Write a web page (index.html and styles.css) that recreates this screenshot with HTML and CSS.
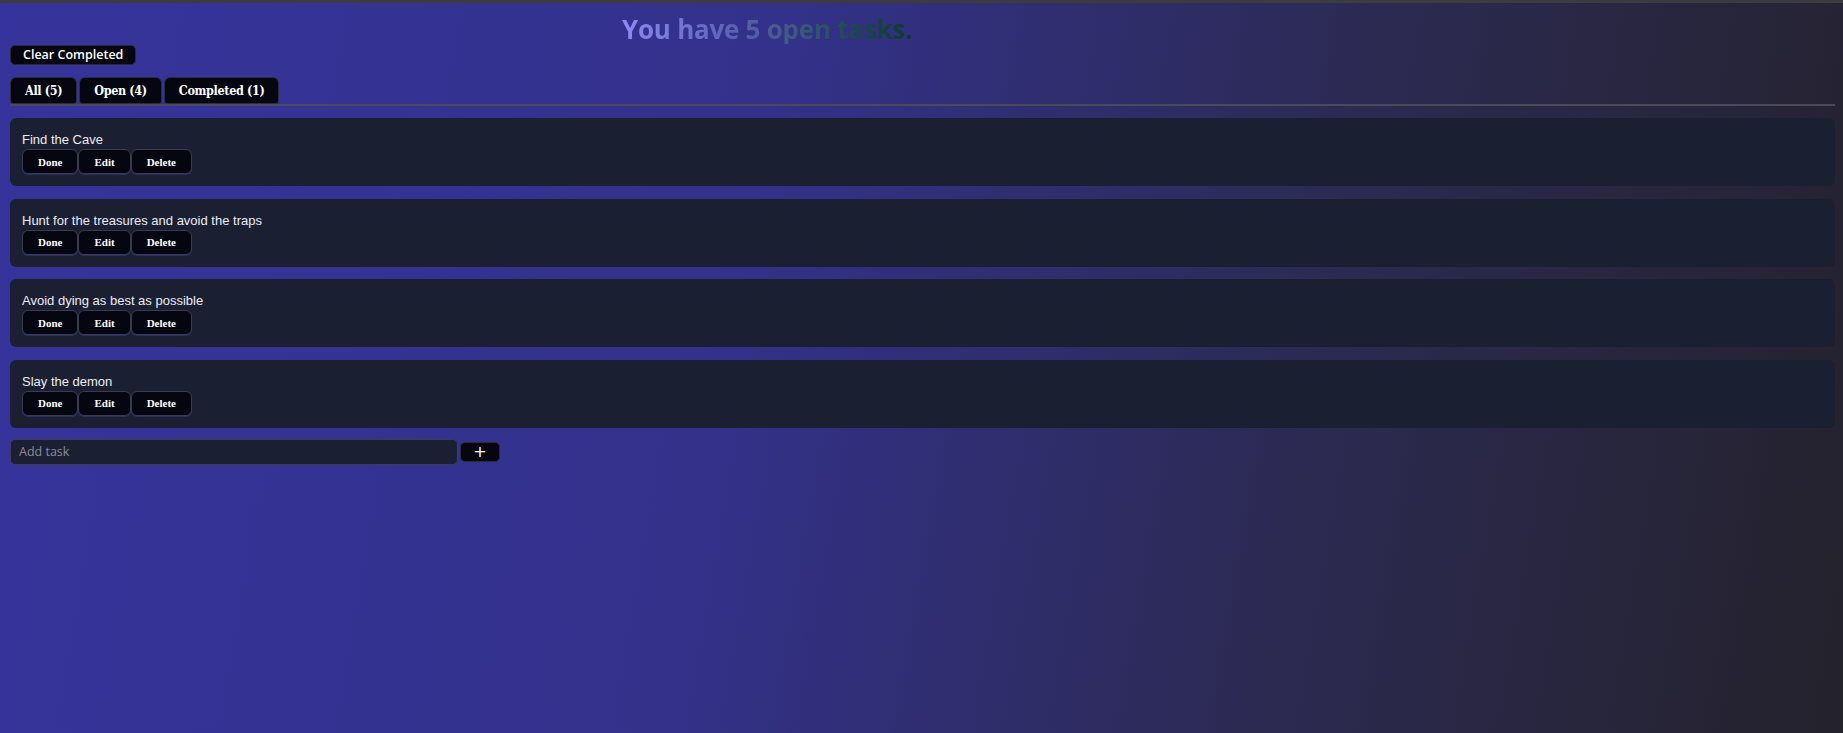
FILE: index.html
```html
<!DOCTYPE html>
<html lang="en">
<head>
<meta charset="utf-8">
<title>Tasks</title>
<link rel="stylesheet" href="styles.css">
</head>
<body>
<div class="app">
  <header class="header">
    <h1 class="title"><span class="title-text">You have 5 open tasks.</span></h1>
  </header>
  <div class="toolbar">
    <button class="clear-btn">Clear Completed</button>
  </div>
  <nav class="tabs">
    <button class="tab">All (5)</button>
    <button class="tab">Open (4)</button>
    <button class="tab">Completed (1)</button>
  </nav>
  <ul class="task-list">
    <li class="task">
      <div class="task-name">Find the Cave</div>
      <div class="task-actions"><button class="act">Done</button><button class="act">Edit</button><button class="act">Delete</button></div>
    </li>
    <li class="task">
      <div class="task-name">Hunt for the treasures and avoid the traps</div>
      <div class="task-actions"><button class="act">Done</button><button class="act">Edit</button><button class="act">Delete</button></div>
    </li>
    <li class="task">
      <div class="task-name">Avoid dying as best as possible</div>
      <div class="task-actions"><button class="act">Done</button><button class="act">Edit</button><button class="act">Delete</button></div>
    </li>
    <li class="task">
      <div class="task-name">Slay the demon</div>
      <div class="task-actions"><button class="act">Done</button><button class="act">Edit</button><button class="act">Delete</button></div>
    </li>
  </ul>
  <form class="add-form">
    <input class="add-input" type="text" placeholder="Add task">
    <button class="add-btn" type="button">+</button>
  </form>
</div>
</body>
</html>
```

FILE: styles.css
```css
html, body {
  margin: 0;
  padding: 0;
  height: 100%;
}
body {
  border-top: 3px solid #3b3b40;
  box-sizing: border-box;
  background: linear-gradient(100deg, #36349c 0%, #33318a 40%, #2c2a52 70%, #24222b 100%);
  color: #e8e8f0;
  font-family: "Liberation Sans", Arial, sans-serif;
}
.app {
  padding: 0 8px 0 10px;
}
.header {
  padding-top: 11px;
}
.title {
  margin: 0 0 0 612px;
  font-family: "Open Sans", "Noto Sans", sans-serif;
  font-weight: 700;
  font-size: 26px;
  line-height: 30px;
  letter-spacing: -0.25px;
}
.title-text {
  display: inline-block;
  background: linear-gradient(90deg, #8f8af6 0%, #6d6fcb 25%, #5060a4 45%, #3a5878 62%, #1f4a52 78%, #0b3a2c 100%);
  -webkit-background-clip: text;
  background-clip: text;
  color: transparent;
}
.toolbar {
  margin-top: 1px;
}
.clear-btn {
  height: 20px;
  padding: 0 12px;
  background: #05060f;
  color: #fff;
  border: 1px solid #2a2a3a;
  border-radius: 5px;
  font-family: "Open Sans", "Noto Sans", sans-serif;
  font-weight: 600;
  font-size: 12.5px;
  line-height: 18px;
}
.tabs {
  margin-top: 12px;
  display: flex;
  gap: 2px;
  border-bottom: 2px solid #4a4a58;
}
.tab {
  height: 27px;
  padding: 0 14px;
  background: #05060f;
  color: #fff;
  border: 1px solid #2c2c40;
  border-radius: 6px 6px 3px 3px;
  font-family: "DejaVu Serif Condensed", "DejaVu Serif", serif;
  font-stretch: condensed;
  font-weight: 700;
  font-size: 12.5px;
  letter-spacing: -0.35px;
}
.task-list {
  list-style: none;
  margin: 12px 0 0;
  padding: 0;
  display: flex;
  flex-direction: column;
  gap: 12.5px;
}
.task {
  background: #1b1f32;
  border-radius: 6px;
  padding: 14px 12px 12px;
}
.task-name {
  font-size: 13px;
  line-height: 15px;
  color: #ececf4;
}
.task-actions {
  margin-top: 2px;
  display: flex;
}
.act {
  height: 25px;
  padding: 0 15px;
  background: #05060f;
  color: #fff;
  border: 1px solid #3a3a52;
  border-radius: 6px;
  box-shadow: 0 1px 0 #2c2f66;
  font-family: "Liberation Serif", "Times New Roman", serif;
  font-weight: 700;
  font-size: 11px;
}
.add-form {
  margin-top: 11px;
  display: flex;
  align-items: center;
  gap: 2px;
}
.add-input {
  width: 448px;
  height: 26px;
  box-sizing: border-box;
  background: #1b1f32;
  border: 1px solid #3a3d55;
  border-radius: 5px;
  padding: 0 8px;
  color: #e8e8f0;
  font-family: "Open Sans", "Noto Sans", sans-serif;
  font-size: 12.5px;
}
.add-input::placeholder {
  color: #8a8b9c;
}
.add-btn {
  width: 40px;
  height: 20px;
  background: #05060f;
  color: #fff;
  border: 1px solid #2a2a3a;
  border-radius: 5px;
  font-family: "DejaVu Sans", sans-serif;
  font-size: 16px;
  line-height: 16px;
  padding: 0;
}
```
